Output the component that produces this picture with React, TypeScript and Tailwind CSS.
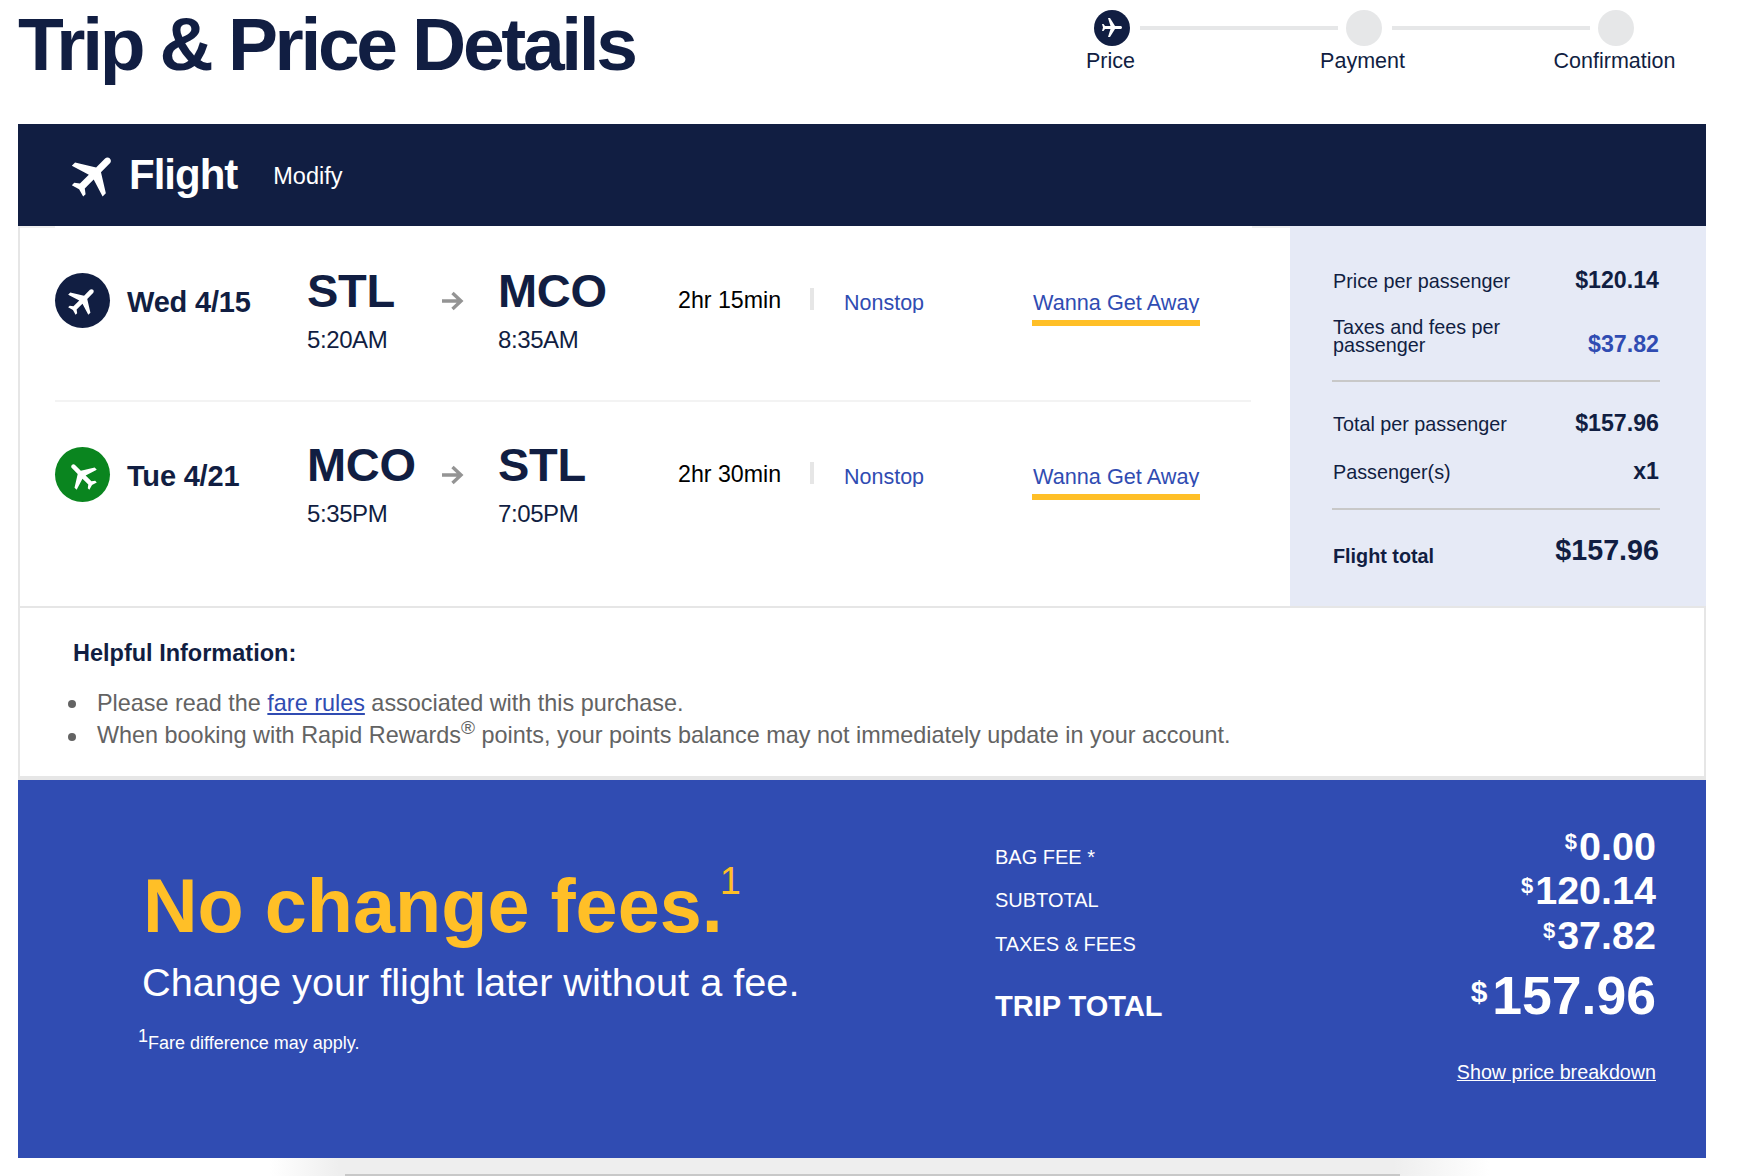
import React from "react";

const PLANE = "M21 16v-2l-8-5V3.5c0-.83-.67-1.5-1.5-1.5S10 2.67 10 3.5V9l-8 5v2l8-2.5V19l-2 1.5V22l3.5-1 3.5 1v-1.5L13 19v-5.5l8 2.5z";

function Plane({ className }: { className: string }) {
  return (
    <svg viewBox="0 0 24 24" fill="currentColor" className={className}>
      <path d={PLANE} />
    </svg>
  );
}

function Step({ label, active }: { label: string; active?: boolean }) {
  return (
    <div className="flex w-[36px] flex-none flex-col items-center">
      <div className={`flex h-[36px] w-[36px] items-center justify-center rounded-full ${active ? "bg-[#111e42] text-white" : "bg-[#e6e7e8]"}`}>
        {active && <Plane className="h-[24px] w-[24px] rotate-90" />}
      </div>
      <div className="mt-[3px] pr-[3px] whitespace-nowrap text-[21.5px] leading-[24px] text-[#111e42]">{label}</div>
    </div>
  );
}

function FlightRow({ date, from, to, dep, arr, dur, green }: { date: string; from: string; to: string; dep: string; arr: string; dur: string; green?: boolean }) {
  return (
    <div className="flex items-start pl-[35px]">
      <div className={`mt-[47px] flex h-[55px] w-[55px] flex-none items-center justify-center rounded-full text-white ${green ? "bg-[#0a851f]" : "bg-[#111e42]"}`}>
        <Plane className={`h-[36px] w-[36px] ${green ? "-rotate-45" : "rotate-45"}`} />
      </div>
      <div className="mt-[62px] ml-[17px] w-[180px] flex-none text-[29px] leading-none font-bold tracking-[-0.2px] text-[#111e42]">{date}</div>
      <div className="mt-[41px] w-[133px] flex-none text-[#111e42]">
        <div className="text-[47px] leading-[48px] font-bold tracking-[-0.3px]">{from}</div>
        <div className="mt-[13px] text-[24px] leading-none tracking-[-0.4px]">{dep}</div>
      </div>
      <div className="mt-[63px] w-[58px] flex-none">
        <svg viewBox="0 0 24 24" fill="none" stroke="#949494" strokeWidth="3.4" className="h-[24px] w-[24px]">
          <path d="M2 12h19M12.5 4l8.5 8-8.5 8" />
        </svg>
      </div>
      <div className="mt-[41px] w-[180px] flex-none text-[#111e42]">
        <div className="text-[47px] leading-[48px] font-bold tracking-[-0.3px]">{to}</div>
        <div className="mt-[13px] text-[24px] leading-none tracking-[-0.4px]">{arr}</div>
      </div>
      <div className="mt-[63px] w-[132px] flex-none text-[23.2px] leading-none text-black">{dur}</div>
      <div className="mt-[62px] h-[22px] w-[4px] flex-none bg-[#e6e6e6]" />
      <div className="mt-[66px] ml-[30px] h-[21px] w-[188px] flex-none overflow-hidden text-[21.5px] leading-[22px] text-[#304cb2]">Nonstop</div>
      <div className="mt-[66px] w-[168px] flex-none text-[#304cb2]">
        <div className="h-[21px] overflow-hidden pl-[1px] text-[21.7px] leading-[22px] whitespace-nowrap">Wanna Get Away</div>
        <div className="mt-[7px] h-[6px] bg-[#ffbf27]" />
      </div>
    </div>
  );
}

function Divider() {
  return <div className="-ml-[1px] h-[2px] w-[328px] bg-[#c8c8c8]" />;
}

function Money({ value, big }: { value: string; big?: boolean }) {
  return big ? (
    <div className="mt-[14px] text-[53.5px] leading-[53px] font-bold text-white">
      <span className="mr-[5px] align-[12px] text-[30px] leading-none">$</span>
      {value}
    </div>
  ) : (
    <div className="text-[39.5px] leading-[39px] font-bold text-white">
      <span className="mr-[2px] align-[11px] text-[22px] leading-none">$</span>
      {value}
    </div>
  );
}

export default function App() {
  return (
    <div className="h-[1176px] w-[1742px] overflow-hidden bg-white font-['Liberation_Sans',Arial,sans-serif]">
      <header className="flex h-[124px] items-start justify-between pr-[108px] pl-[18px]">
        <h1 className="mt-[7px] text-[75px] leading-none font-bold tracking-[-3.35px] whitespace-nowrap text-[#111e42]">Trip &amp; Price Details</h1>
        <div className="mt-[10px] flex items-start">
          <Step label="Price" active />
          <div className="mt-[16px] mr-[8px] ml-[10px] h-[4px] w-[198px] bg-[#e6e7e8]" />
          <Step label="Payment" />
          <div className="mt-[16px] mr-[8px] ml-[10px] h-[4px] w-[198px] bg-[#e6e7e8]" />
          <Step label="Confirmation" />
        </div>
      </header>

      <main className="mx-[18px] w-[1688px]">
        <div className="flex h-[102px] items-center bg-[#111e42] pl-[49px] text-white">
          <Plane className="h-[55px] w-[55px] flex-none rotate-45" />
          <span className="ml-[7px] text-[42px] leading-none font-bold tracking-[-1px]">Flight</span>
          <span className="mt-[3px] ml-[36px] text-[23.5px] leading-none">Modify</span>
        </div>

        <div className="flex h-[380px]">
          <div className="w-[1272px] flex-none border-l-2 border-[#e6e6e6]">
            <div className="-mb-[2px] flex h-[2px] justify-between">
              <div className="w-[35px] bg-[#f0f0f0]" />
              <div className="w-[38px] bg-[#f0f0f0]" />
            </div>
            <div className="h-[174px]">
              <FlightRow date="Wed 4/15" from="STL" to="MCO" dep="5:20AM" arr="8:35AM" dur="2hr 15min" />
            </div>
            <div className="ml-[35px] h-[2px] w-[1196px] bg-[#f3f3f3]" />
            <div className="-mt-[2px]">
              <FlightRow green date="Tue 4/21" from="MCO" to="STL" dep="5:35PM" arr="7:05PM" dur="2hr 30min" />
            </div>
          </div>

          <aside className="w-[416px] flex-none bg-[#e6eaf6] pt-[43px] pr-[47px] pl-[43px] text-[19.8px] leading-[23px] text-[#111e42]">
            <div className="flex items-baseline justify-between">
              <span>Price per passenger</span>
              <span className="text-[23.2px] font-bold">$120.14</span>
            </div>
            <div className="mt-[25px] flex h-[38px] justify-between">
              <span className="w-[200px] leading-[18px]">Taxes and fees per passenger</span>
              <span className="self-end text-[23.2px] font-bold text-[#304cb2]">$37.82</span>
            </div>
            <div className="mt-[24px]"><Divider /></div>
            <div className="mt-[30px] flex items-baseline justify-between">
              <span>Total per passenger</span>
              <span className="text-[23.2px] font-bold">$157.96</span>
            </div>
            <div className="mt-[24px] flex items-baseline justify-between">
              <span>Passenger(s)</span>
              <span className="text-[23.2px] font-bold">x1</span>
            </div>
            <div className="mt-[24px]"><Divider /></div>
            <div className="mt-[26px] flex items-start justify-between">
              <span className="mt-[11px] leading-none font-bold">Flight total</span>
              <span className="text-[28.7px] leading-[28px] font-bold">$157.96</span>
            </div>
          </aside>
        </div>

        <section className="h-[174px] border-x-2 border-t-2 border-b-4 border-[#e6e6e6] pt-[33px] pl-[53px]">
          <h2 className="text-[23.5px] leading-[24px] font-bold text-[#111e42]">Helpful Information:</h2>
          <ul className="mt-[22px] text-[23.4px] leading-[32px] text-[#636363]">
            <li className="flex">
              <span className="mt-[13px] -ml-[5px] h-[8px] w-[8px] flex-none rounded-full bg-[#636363]" />
              <span className="ml-[21px]">Please read the <a className="text-[#304cb2] underline">fare rules</a> associated with this purchase.</span>
            </li>
            <li className="flex">
              <span className="mt-[14px] -ml-[5px] h-[8px] w-[8px] flex-none rounded-full bg-[#636363]" />
              <span className="ml-[21px]">When booking with Rapid Rewards<sup className="text-[19px] leading-none">®</sup> points, your points balance may not immediately update in your account.</span>
            </li>
          </ul>
        </section>

        <section className="flex h-[378px] bg-[#304cb2] text-white">
          <div className="w-[977px] flex-none pt-[82px] pl-[125px]">
            <div className="h-[76px] text-[75.6px] leading-none font-bold whitespace-nowrap text-[#ffbf27]">
              No change fees.<span className="-ml-[3px] align-[38px] text-[38px] leading-none font-normal">1</span>
            </div>
            <div className="mt-[25px] -ml-[1px] text-[39.7px] leading-none">Change your flight later without a fee.</div>
            <div className="mt-[24px] -ml-[5px] text-[18px] leading-none">
              <span className="align-[7px] text-[18px] leading-none">1</span>Fare difference may apply.
            </div>
          </div>
          <div className="w-[250px] flex-none pt-[67px] text-[20px] leading-[20px] whitespace-nowrap">
            <div>BAG FEE *</div>
            <div className="mt-[23px]">SUBTOTAL</div>
            <div className="mt-[24px]">TAXES &amp; FEES</div>
            <div className="mt-[38px] text-[29px] leading-[29px] font-bold">TRIP TOTAL</div>
          </div>
          <div className="flex flex-1 flex-col items-end pt-[47px] pr-[50px]">
            <Money value="0.00" />
            <div className="mt-[5px]"><Money value="120.14" /></div>
            <div className="mt-[6px]"><Money value="37.82" /></div>
            <Money big value="157.96" />
            <a className="mt-[40px] text-[19.7px] leading-[20px] underline">Show price breakdown</a>
          </div>
        </section>
      </main>

      <div className="flex h-[18px] flex-col justify-end bg-[linear-gradient(90deg,#fff_15.5%,#eee_19.5%,#eee_80%,#fff_85.5%)]">
        <div className="ml-[345px] h-[2px] w-[1055px] bg-[#c8c8c8]" />
      </div>
    </div>
  );
}
